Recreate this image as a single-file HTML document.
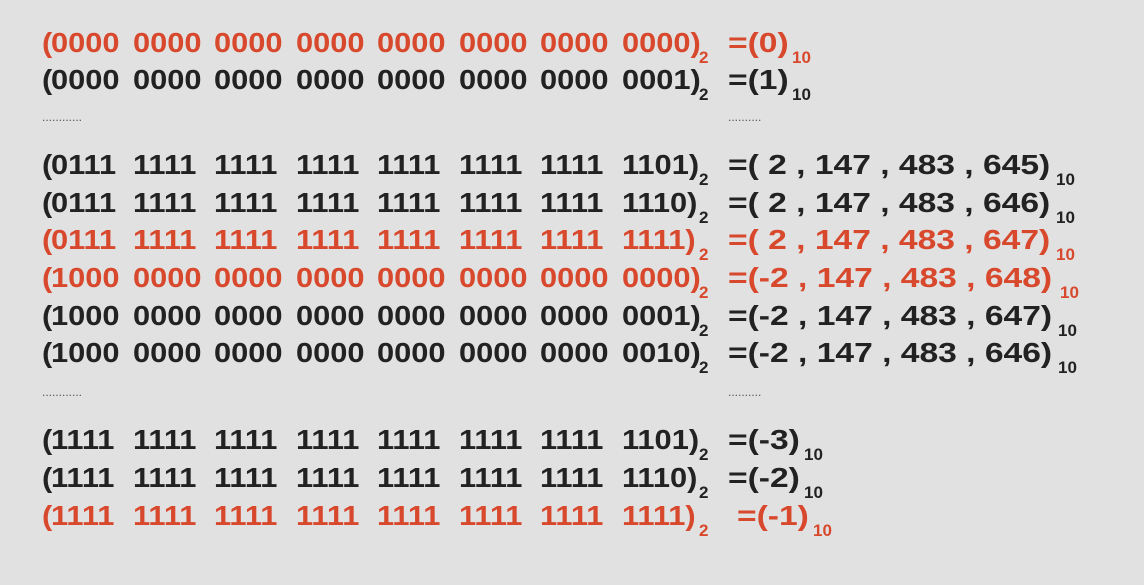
<!DOCTYPE html>
<html><head><meta charset="utf-8"><style>
html,body{margin:0;padding:0}
body{width:1144px;height:585px;background:#e1e1e1;position:relative;overflow:hidden;font-family:"Liberation Sans",sans-serif;font-weight:bold;}
.r{position:absolute;left:0;width:1144px;height:32px;font-size:28px;line-height:32px;white-space:pre;color:#222;}
.g{position:absolute;top:0;transform:scaleX(1.1);transform-origin:left center}
.v{position:absolute;left:728px;transform:scaleX(1.2);transform-origin:left center}
.s{position:absolute;font-size:17px;line-height:17px;top:22px}
.red{color:#d8482c}
.d{position:absolute;font-size:12px;color:#555;font-weight:normal}
</style></head><body>
<div class="d" style="left:42px;top:110px">............</div>
<div class="d" style="left:728px;top:110px">..........</div>
<div class="d" style="left:42px;top:385px">............</div>
<div class="d" style="left:728px;top:385px">..........</div>
<div id="c"></div>
<script>
var rows=[
[27,1,"0000 0000 0000 0000 0000 0000 0000 0000","=(0)",792,728],
[64,0,"0000 0000 0000 0000 0000 0000 0000 0001","=(1)",792,728],
[149,0,"0111 1111 1111 1111 1111 1111 1111 1101","=( 2 , 147 , 483 , 645)",1056,728],
[187,0,"0111 1111 1111 1111 1111 1111 1111 1110","=( 2 , 147 , 483 , 646)",1056,728],
[224,1,"0111 1111 1111 1111 1111 1111 1111 1111","=( 2 , 147 , 483 , 647)",1056,728],
[262,1,"1000 0000 0000 0000 0000 0000 0000 0000","=(-2 , 147 , 483 , 648)",1060,728],
[300,0,"1000 0000 0000 0000 0000 0000 0000 0001","=(-2 , 147 , 483 , 647)",1058,728],
[337,0,"1000 0000 0000 0000 0000 0000 0000 0010","=(-2 , 147 , 483 , 646)",1058,728],
[424,0,"1111 1111 1111 1111 1111 1111 1111 1101","=(-3)",804,728],
[462,0,"1111 1111 1111 1111 1111 1111 1111 1110","=(-2)",804,728],
[500,1,"1111 1111 1111 1111 1111 1111 1111 1111","=(-1)",813,737]];
var h="";
rows.forEach(function(r){
 h+='<div class="r'+(r[1]?' red':'')+'" style="top:'+r[0]+'px">';
 h+='<span class="g" style="left:42px">(</span>';
 var gs=r[2].split(" ");
 gs.forEach(function(g,i){
  h+='<span class="g" style="left:'+(51+i*81.5)+'px">'+g+(i==7?')':'')+'</span>';
 });
 h+='<span class="s" style="left:699px">2</span>';
 h+='<span class="v" style="left:'+r[5]+'px">'+r[3]+'</span>';
 h+='<span class="s" style="left:'+r[4]+'px">10</span></div>';
});
document.getElementById("c").innerHTML=h;
</script>
</body></html>
